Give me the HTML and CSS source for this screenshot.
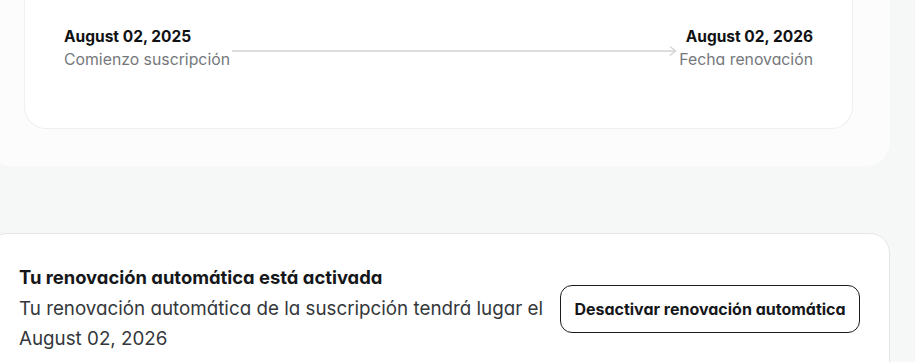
FILE: index.html
```html
<!DOCTYPE html>
<html lang="es">
<head>
<meta charset="utf-8">
<link rel="stylesheet" href="styles.css">
</head>
<body>
<div class="page">
  <section class="outer-card">
    <div class="inner-card">
      <div class="timeline">
        <div class="point">
          <div class="date">August 02, 2025</div>
          <div class="label">Comienzo suscripción</div>
        </div>
        <div class="arrow">
          <span class="line"></span>
          <svg class="head" width="8" height="12" viewBox="0 0 8 12"><path d="M1 1.5 L6.5 6 L1 10.5" fill="none" stroke="#d2d3d5" stroke-width="1.3"/></svg>
        </div>
        <div class="point end">
          <div class="date">August 02, 2026</div>
          <div class="label">Fecha renovación</div>
        </div>
      </div>
    </div>
  </section>

  <section class="renew-card">
    <div class="renew-text">
      <h2 class="renew-title">Tu renovación automática está activada</h2>
      <p class="renew-desc">Tu renovación automática de la suscripción tendrá lugar el August 02, 2026</p>
    </div>
    <button class="btn-outline">Desactivar renovación automática</button>
  </section>
</div>
</body>
</html>
```
FILE: styles.css
```css
* { box-sizing: border-box; }
html, body { margin: 0; padding: 0; }
body {
  background: #f6f7f7;
  font-family: Inter, "Noto Sans", sans-serif;
  font-feature-settings: "cv11";
  overflow: hidden;
  height: 362px;
}
.page {
  margin: -80px 0 0 -13px;
  width: 903px;
}
.outer-card {
  background: #fcfcfc;
  border-radius: 24px;
  padding: 37px 37px 37px 37px;
}
.inner-card {
  background: #ffffff;
  border: 1px solid #eeefef;
  border-top: none;
  border-radius: 0 0 22px 22px;
  padding: 69px 39px 56px 39px;
}
.timeline {
  display: flex;
  align-items: center;
}
.point { flex: none; }
.point.end { text-align: right; }
.date {
  font-size: 15.5px;
  font-weight: 700;
  color: #111214;
  line-height: 22px;
}
.label {
  font-size: 15.8px;
  color: #75787c;
  line-height: 24px;
}
.arrow {
  flex: 1;
  display: flex;
  align-items: center;
  padding: 0 2px 0 2px;
  margin-top: 3px;
}
.line {
  flex: 1;
  height: 2px;
  background: #dcdddf;
  margin-right: -7px;
}
.head { flex: none; }
.renew-card {
  margin-top: 67px;
  background: #ffffff;
  border: 1px solid #e4e5e6;
  border-radius: 20px;
  display: flex;
  align-items: center;
  padding: 30px 29px 40px 31px;
}
.renew-text {
  width: 540px;
  flex: none;
}
.renew-title {
  margin: 0;
  font-size: 18.4px;
  font-weight: 700;
  color: #15171a;
  line-height: 26px;
}
.renew-desc {
  margin: 4px 0 0 0;
  font-size: 18.8px;
  color: #34373b;
  line-height: 30px;
}
.btn-outline {
  margin-left: auto;
  width: 300px;
  height: 48px;
  background: #ffffff;
  border: 1px solid #1a1b1d;
  border-radius: 12px;
  font-family: inherit;
  font-feature-settings: "cv11";
  font-size: 16px;
  font-weight: 700;
  color: #15171a;
}
```
